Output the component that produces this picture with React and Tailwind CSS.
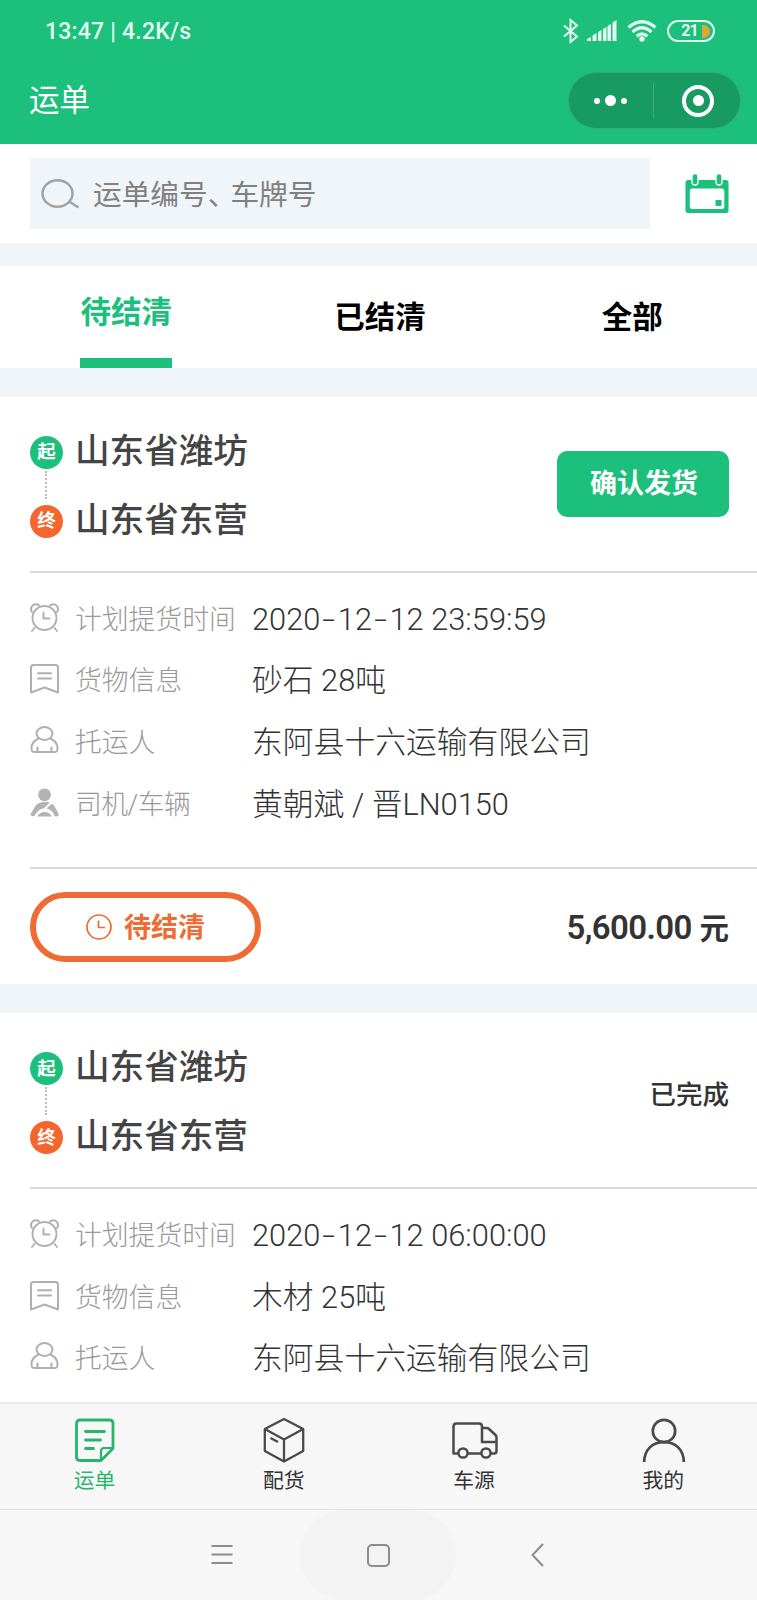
import clsx from "clsx";

const GREEN = "#1cbf7b";

const orders = [
  {
    id: 1,
    from: "山东省潍坊",
    to: "山东省东营",
    action: "确认发货",
    rows: [
      { icon: AlarmIcon, label: "计划提货时间", value: "2020-12-12 23:59:59" },
      { icon: NoteIcon, label: "货物信息", value: "砂石 28吨" },
      { icon: PersonIcon, label: "托运人", value: "东阿县十六运输有限公司" },
      { icon: DriverIcon, label: "司机/车辆", value: "黄朝斌 / 晋LN0150" },
    ],
    status: "待结清",
    price: "5,600.00",
  },
  {
    id: 2,
    from: "山东省潍坊",
    to: "山东省东营",
    done: "已完成",
    rows: [
      { icon: AlarmIcon, label: "计划提货时间", value: "2020-12-12 06:00:00" },
      { icon: NoteIcon, label: "货物信息", value: "木材 25吨" },
      { icon: PersonIcon, label: "托运人", value: "东阿县十六运输有限公司" },
    ],
  },
];

const tabs = ["待结清", "已结清", "全部"];

const navItems = [
  { label: "运单", icon: WaybillIcon },
  { label: "配货", icon: BoxIcon },
  { label: "车源", icon: TruckIcon },
  { label: "我的", icon: UserIcon },
];

function AlarmIcon() {
  return (
    <svg width="30" height="30" viewBox="0 0 30 30" fill="none" stroke="#b0b0b0" strokeWidth="1.9" strokeLinecap="round">
      <circle cx="14.5" cy="15" r="12" />
      <path d="M2 9C-1 4.500 3.500-.8 9 2.300M27 9C30 4.500 25.500-.8 20 2.300" />
      <path d="M4.500 25 2 28M24.500 25 27 28M13.500 9.500V15.500H19.500" />
    </svg>
  );
}

function NoteIcon() {
  return (
    <svg width="30" height="30" viewBox="0 0 30 30" fill="none" stroke="#b0b0b0" strokeWidth="2" strokeLinejoin="round">
      <path d="M1 28.500V3.500Q1 1 3.500 1H25.500Q28 1 28 3.500V28.500L14.500 23.500Z" />
      <path d="M8 9.200H21M8 14.500H21" strokeLinecap="round" />
    </svg>
  );
}

function PersonIcon() {
  return (
    <svg width="30" height="30" viewBox="0 0 30 30" fill="none" stroke="#b0b0b0" strokeWidth="2" strokeLinecap="round">
      <ellipse cx="14.500" cy="7.500" rx="8" ry="6.500" />
      <path d="M8.500 12.500C4.500 14.500 1.500 17.500 1.500 22C1.500 25.500 2.500 26 4.500 26H24.500C26.500 26 27.500 25.500 27.500 22C27.500 17.500 24.500 14.500 20.500 12.500" />
      <path d="M7.500 21.500V25.500M21.500 21.500V25.500" />
    </svg>
  );
}

function DriverIcon() {
  return (
    <svg width="30" height="30" viewBox="0 0 30 30" fill="#b3b3b3">
      <circle cx="14.500" cy="6.800" r="6.400" />
      <path d="M5 18.500C8 14 14 13.500 20 14.500L13.500 20.500C9.500 21 6.500 24 4.500 28Q1.500 29 .3 26.500Z" />
      <path d="M22 15.500C24.500 17.500 26.500 21.500 28.800 26.500Q28 29.500 24.500 28C23.500 24 20.500 21.500 16.500 20.500Z" />
      <path d="M7 28.500Q9.500 24 14.500 24T22 28.500Z" />
    </svg>
  );
}

function WaybillIcon() {
  return (
    <svg width="44" height="46" viewBox="0 0 44 46" fill="none" stroke="#27b56b" strokeWidth="2.800" strokeLinecap="round" strokeLinejoin="round">
      <path d="M28 43.500H7Q3.500 43.500 3.500 40V6.500Q3.500 3 7 3H36.500Q40 3 40 6.500V31.500Z" />
      <path d="M28 42.500V34.500Q28 31 31 31H39" strokeWidth="2.200" />
      <path d="M12.500 14.500H31.500M12.500 23H27.500M12.500 31.500H20.500" />
    </svg>
  );
}

function BoxIcon() {
  return (
    <svg width="44" height="46" viewBox="0 0 44 46" fill="none" stroke="#4a4a4a" strokeWidth="2.300" strokeLinejoin="round">
      <path d="M22 2 41.200 12V34L22 44.500L2.800 34V12Z" />
      <path d="M2.800 12 22 22.500L41.200 12M22 22.500V44.500" />
      <path d="M8.500 21 16 25" />
    </svg>
  );
}

function TruckIcon() {
  return (
    <svg width="48" height="46" viewBox="-1 0 48 46" fill="none" stroke="#4a4a4a" strokeWidth="2.500" strokeLinejoin="round">
      <path d="M7.500 36.500H2.500V9.500Q2.500 6.500 5.500 6.500H28Q31 6.500 31 9.500V25H45.500" />
      <path d="M31 11H35.500Q37 11 38 12L44.500 18Q45.500 19 45.500 20.500V34Q45.500 36.500 43 36.500H39.500M16.500 36.500H30" />
      <circle cx="12" cy="36" r="4.600" />
      <circle cx="35" cy="36" r="4.600" />
    </svg>
  );
}

function UserIcon() {
  return (
    <svg width="46" height="46" viewBox="-1 0 46 46" fill="none" stroke="#4a4a4a" strokeWidth="2.700">
      <circle cx="23" cy="14" r="11.200" />
      <path d="M3.200 45C3.200 33 11 25.200 23 25.200S42.800 33 42.800 45" />
    </svg>
  );
}

function StatusBar() {
  return (
    <div className="flex h-[62px] items-center justify-between pl-[45px] pr-[42px] text-[#e2faef]">
      <span className="text-[23px] leading-none font-medium tracking-[0.2px]">13:47 | 4.2K/s</span>
      <div className="flex items-center">
        <svg width="16" height="26" viewBox="0 0 16 26" fill="none" stroke="currentColor" strokeWidth="2">
          <path d="M1 7.500 14 18.500 7.500 24V2L14 7.500 1 18.500" />
        </svg>
        <svg className="ml-[8px]" width="30" height="22" viewBox="0 0 30 22" fill="currentColor">
          <path d="M0 21V19L4 17V21ZM5.500 21V15.500L9.500 13V21ZM11 21V12L14.500 10V21ZM16 21V9L19.500 7V21ZM20.500 21V6L24 4V21ZM25.500 21V2.500L29.500 0V21Z" />
        </svg>
        <svg className="ml-[10px]" width="30" height="22" viewBox="0 0 30 22" fill="none" stroke="currentColor" strokeWidth="3.200">
          <path d="M1.500 7.500Q15-4 28.500 7.500M5.500 12Q15 3.500 24.500 12M9.700 16.200Q15 11.500 20.300 16.200" />
          <circle cx="15" cy="19" r="2.700" fill="currentColor" stroke="none" />
        </svg>
        <div className="ml-[10px] flex h-[22px] w-[48px] items-center justify-end rounded-full border-2 border-current pr-[3px]">
          <span className="text-[16px] leading-none font-bold tracking-[-0.8px]">21</span>
          <span className="ml-[4px] h-[13px] w-[8px] rounded-r-full bg-[#e0a832]" />
        </div>
      </div>
    </div>
  );
}

function Header() {
  return (
    <header className="h-[144px] shrink-0 bg-[#1cbf7b]">
      <StatusBar />
      <div className="flex h-[77px] items-center justify-between pr-[16px] pl-[29px]">
        <h1 className="pt-[2px] text-[30.500px] leading-none text-white">运单</h1>
        <div className="flex h-[57px] w-[173px] items-center rounded-full border border-[#35aa78] bg-[#189a63]">
          <div className="flex flex-1 items-center justify-center gap-[5px]">
            <span className="size-[6px] rounded-full bg-white" />
            <span className="size-[11px] rounded-full bg-white" />
            <span className="size-[6px] rounded-full bg-white" />
          </div>
          <span className="h-[35px] w-px bg-[#3fae7f]" />
          <div className="flex flex-1 items-center justify-center pl-[3px]">
            <span className="flex size-[32px] items-center justify-center rounded-full border-[4px] border-white">
              <span className="size-[11px] rounded-full bg-white" />
            </span>
          </div>
        </div>
      </div>
    </header>
  );
}

function SearchBar() {
  return (
    <div className="flex h-[99px] shrink-0 items-center justify-between bg-white pr-[28px] pl-[30px]">
      <div className="flex h-[71px] w-[620px] items-center bg-[#f0f5fa] pl-[11px]">
        <svg width="39" height="30" viewBox="0 0 39 30" fill="none" stroke="#a3a3a3" strokeWidth="2.500">
          <ellipse cx="16.500" cy="14.500" rx="15" ry="13.300" />
          <path d="M28 22.500 37.500 28.500" />
        </svg>
        <span className="ml-[13px] pt-[4px] text-[28.7px] leading-none text-[#808080]">
          运单编号<span className="tracking-[-6px]">、</span>车牌号
        </span>
      </div>
      <svg width="44" height="40" viewBox="0 0 44 40">
        <rect x=".500" y="6" width="43" height="33" rx="2.500" fill={GREEN} />
        <rect x="4.800" y="14.500" width="34.500" height="20.500" rx="2.500" fill="#fff" />
        <rect x="30.500" y="26" width="6" height="6" rx=".500" fill={GREEN} />
        <rect x="7" y="-.500" width="6" height="11.500" rx="3" fill={GREEN} stroke="#fff" strokeWidth="1.300" />
        <rect x="31" y="-.500" width="6" height="11.500" rx="3" fill={GREEN} stroke="#fff" strokeWidth="1.300" />
      </svg>
    </div>
  );
}

function Tabs() {
  return (
    <div className="mt-[23px] grid h-[102px] shrink-0 grid-cols-3 bg-white">
      {tabs.map((tab, i) => (
        <div key={tab} className={clsx("flex justify-center", i > 0 && "pl-[3px]")}>
          <div
            className={clsx(
              "flex items-center text-[30.5px] leading-none font-bold",
              i === 0 ? "border-b-[10px] border-[#1cbf7b] pt-[3px] text-[#1cbf7b]" : "pt-[2px] text-black",
            )}
          >
            {tab}
          </div>
        </div>
      ))}
    </div>
  );
}

function RoutePoint({ tag, city, color }) {
  return (
    <div className="flex h-[34px] items-center">
      <span className={clsx("flex size-[33px] items-center justify-center rounded-full text-[18.5px] leading-none font-bold text-white", color)}>
        {tag}
      </span>
      <span className="ml-[12px] pb-[3px] text-[34.6px] leading-none font-medium text-[#444]">{city}</span>
    </div>
  );
}

// dates use a dash as wide as a digit
function Value({ text }) {
  return (
    <span className="pt-[3px] text-[30.800px] leading-none font-light text-[#333]">
      {text.split(/(-)/).map((part, i) =>
        part === "-" ? (
          <span key={i} className="inline-block w-[17.500px] scale-x-150 text-center">
            -
          </span>
        ) : (
          part
        ),
      )}
    </span>
  );
}

function OrderCard({ order }) {
  return (
    <section className="mt-[29px] shrink-0 bg-white pl-[30px]">
      <div className="flex h-[174px] items-center justify-between pr-[28px]">
        <div className="pt-[6px]">
          <RoutePoint tag="起" city={order.from} color="bg-[#1cbf7b]" />
          <div className="mt-[1px] mb-[6px] ml-[15px] h-[28px] border-l-2 border-dotted border-[#bbb]" />
          <RoutePoint tag="终" city={order.to} color="bg-[#f4662e]" />
        </div>
        {order.action && (
          <button className="mb-[1px] h-[66px] w-[172px] rounded-[10px] bg-[#1cbf7b] pt-[2px] pl-[2px] text-[27px] leading-none font-bold text-white">
            {order.action}
          </button>
        )}
        {order.done && <span className="pb-[10px] text-[26.5px] leading-none font-medium text-[#333]">{order.done}</span>}
      </div>

      <div className="border-t-2 border-[#d9dbdd] pt-[15px] pb-[33px]">
        {order.rows.map(({ icon: Icon, label, value }) => (
          <div key={label} className="flex h-[61.600px] items-center">
            <div className="pb-[2px]">
              <Icon />
            </div>
            <span
              className={clsx(
                "ml-[15px] w-[177px] pt-[3px] text-[26.800px] leading-none font-light text-[#999]",
                label.includes("/") && "tracking-[-0.5px]",
              )}
            >
              {label}
            </span>
            <Value text={value} />
          </div>
        ))}
      </div>

      {order.price && (
        <div className="flex h-[117px] items-center justify-between border-t-2 border-[#d9dbdd] pr-[28px]">
          <div className="flex h-[70px] w-[231px] items-center justify-center rounded-full border-[6px] border-[#ee6b33]">
            <svg width="26" height="26" viewBox="0 0 26 26" fill="none" stroke="#ee6b33" strokeWidth="1.700">
              <circle cx="13" cy="13" r="12" />
              <path d="M12.500 6.500V13.500H19" />
            </svg>
            <span className="ml-[12px] pt-[3px] text-[27px] leading-none font-bold text-[#ee6b33]">{order.status}</span>
          </div>
          <span className="pt-[2px] text-[33px] leading-none font-semibold tracking-[-0.6px] text-[#333]">
            {order.price} <span className="text-[29.500px] tracking-normal">元</span>
          </span>
        </div>
      )}
    </section>
  );
}

function BottomNav() {
  return (
    <nav className="grid h-[107px] shrink-0 grid-cols-4 border-t-2 border-[#ebebeb] bg-[#f7f7f7]">
      {navItems.map(({ label, icon: Icon }, i) => (
        <div key={label} className={clsx("flex flex-col items-center pt-[13px]", i > 1 && "pl-[2px]")}>
          <Icon />
          <span className={clsx("mt-[8px] text-[20.800px] leading-none", i === 0 ? "text-[#27b56b]" : "text-[#333]")}>{label}</span>
        </div>
      ))}
    </nav>
  );
}

function SystemNav() {
  return (
    <div className="flex h-[91px] shrink-0 items-center justify-center border-t border-[#e3e3e3] bg-[#f7f7f7] pr-[2px]">
      <svg width="22" height="22" viewBox="0 0 22 22" stroke="#8c8c8c" strokeWidth="2">
        <path d="M.500 2H21.500M.500 10.500H21.500M.500 19H21.500" />
      </svg>
      <div className="mr-[75px] ml-[67px] flex h-[90px] w-[156px] items-center justify-center rounded-full bg-[#f3f3f3]">
        <span className="size-[23px] rounded-[5px] border-2 border-[#8c8c8c]" />
      </div>
      <svg width="13" height="24" viewBox="0 0 13 24" fill="none" stroke="#8c8c8c" strokeWidth="2">
        <path d="M12 1 1.500 12 12 23" />
      </svg>
    </div>
  );
}

export default function App() {
  return (
    <div className="flex h-[1600px] w-[757px] flex-col overflow-hidden bg-[#f0f5fa] font-[Roboto,'Noto_Sans_CJK_SC',sans-serif]">
      <Header />
      <SearchBar />
      <Tabs />
      <main className="flex min-h-0 flex-1 flex-col overflow-hidden">
        {orders.map((order) => (
          <OrderCard key={order.id} order={order} />
        ))}
      </main>
      <BottomNav />
      <SystemNav />
    </div>
  );
}
